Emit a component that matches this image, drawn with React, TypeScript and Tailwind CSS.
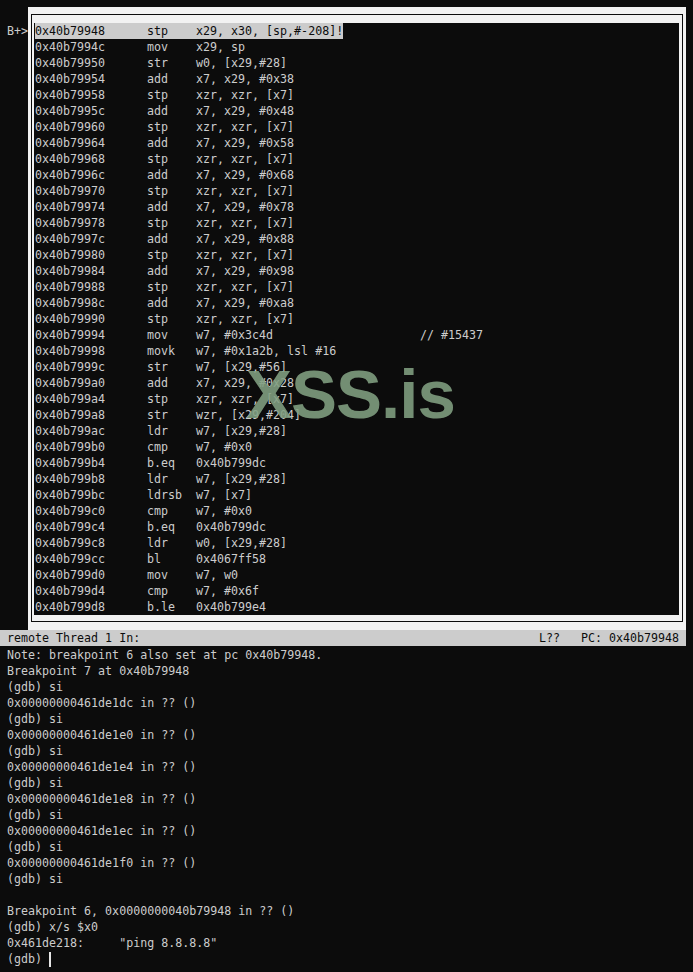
const rows: [string, string, string, string?][] = [
  ['0x40b79948', 'stp', 'x29, x30, [sp,#-208]!'],
  ['0x40b7994c', 'mov', 'x29, sp'],
  ['0x40b79950', 'str', 'w0, [x29,#28]'],
  ['0x40b79954', 'add', 'x7, x29, #0x38'],
  ['0x40b79958', 'stp', 'xzr, xzr, [x7]'],
  ['0x40b7995c', 'add', 'x7, x29, #0x48'],
  ['0x40b79960', 'stp', 'xzr, xzr, [x7]'],
  ['0x40b79964', 'add', 'x7, x29, #0x58'],
  ['0x40b79968', 'stp', 'xzr, xzr, [x7]'],
  ['0x40b7996c', 'add', 'x7, x29, #0x68'],
  ['0x40b79970', 'stp', 'xzr, xzr, [x7]'],
  ['0x40b79974', 'add', 'x7, x29, #0x78'],
  ['0x40b79978', 'stp', 'xzr, xzr, [x7]'],
  ['0x40b7997c', 'add', 'x7, x29, #0x88'],
  ['0x40b79980', 'stp', 'xzr, xzr, [x7]'],
  ['0x40b79984', 'add', 'x7, x29, #0x98'],
  ['0x40b79988', 'stp', 'xzr, xzr, [x7]'],
  ['0x40b7998c', 'add', 'x7, x29, #0xa8'],
  ['0x40b79990', 'stp', 'xzr, xzr, [x7]'],
  ['0x40b79994', 'mov', 'w7, #0x3c4d', '// #15437'],
  ['0x40b79998', 'movk', 'w7, #0x1a2b, lsl #16'],
  ['0x40b7999c', 'str', 'w7, [x29,#56]'],
  ['0x40b799a0', 'add', 'x7, x29, #0x28'],
  ['0x40b799a4', 'stp', 'xzr, xzr, [x7]'],
  ['0x40b799a8', 'str', 'wzr, [x29,#204]'],
  ['0x40b799ac', 'ldr', 'w7, [x29,#28]'],
  ['0x40b799b0', 'cmp', 'w7, #0x0'],
  ['0x40b799b4', 'b.eq', '0x40b799dc'],
  ['0x40b799b8', 'ldr', 'w7, [x29,#28]'],
  ['0x40b799bc', 'ldrsb', 'w7, [x7]'],
  ['0x40b799c0', 'cmp', 'w7, #0x0'],
  ['0x40b799c4', 'b.eq', '0x40b799dc'],
  ['0x40b799c8', 'ldr', 'w0, [x29,#28]'],
  ['0x40b799cc', 'bl', '0x4067ff58'],
  ['0x40b799d0', 'mov', 'w7, w0'],
  ['0x40b799d4', 'cmp', 'w7, #0x6f'],
  ['0x40b799d8', 'b.le', '0x40b799e4'],
]

const output = [
  'Note: breakpoint 6 also set at pc 0x40b79948.',
  'Breakpoint 7 at 0x40b79948',
  '(gdb) si',
  '0x00000000461de1dc in ?? ()',
  '(gdb) si',
  '0x00000000461de1e0 in ?? ()',
  '(gdb) si',
  '0x00000000461de1e4 in ?? ()',
  '(gdb) si',
  '0x00000000461de1e8 in ?? ()',
  '(gdb) si',
  '0x00000000461de1ec in ?? ()',
  '(gdb) si',
  '0x00000000461de1f0 in ?? ()',
  '(gdb) si',
  '',
  'Breakpoint 6, 0x0000000040b79948 in ?? ()',
  '(gdb) x/s $x0',
  '0x461de218:     "ping 8.8.8.8"',
]

export default function App() {
  return (
    <div
      className="relative w-[693px] h-[972px] overflow-hidden bg-[#0c0c0c] text-[#cccccc] text-[11.65px] leading-[16px] whitespace-pre"
      style={{ fontFamily: '"DejaVu Sans Mono", "Liberation Mono", monospace' }}
    >
      {/* source window */}
      <div className="flex pt-[7px]">
        <div className="w-[28px] pt-[16px] pl-[7px]">B+&gt;</div>
        <div className="w-[658px] bg-[#f2f2f2] pt-[7px] pb-[8px] px-[3px]">
          <div className="border border-[#0c0c0c] pt-[8px] pb-[6px] pl-[2px] pr-[3px]">
            <div className="bg-[#0c0c0c] pl-[1px]">
              {rows.map(([addr, op, args, comment], i) => (
                <div key={addr} className="flex h-[16px]">
                  <div className={i === 0 ? 'flex bg-[#cccccc] text-[#0c0c0c]' : 'flex'}>
                    <span className="w-[112px]">{addr}</span>
                    <span className="w-[49px]">{op}</span>
                    <span className={comment ? 'w-[224px]' : ''}>{args}</span>
                  </div>
                  {comment && <span>{comment}</span>}
                </div>
              ))}
            </div>
          </div>
        </div>
      </div>

      {/* status line */}
      <div className="flex h-[16px] w-[686px] bg-[#cccccc] text-[#0c0c0c] pl-[7px]">
        <span className="w-[532px]">remote Thread 1 In:</span>
        <span className="w-[42px]">L??</span>
        <span>PC: 0x40b79948</span>
      </div>

      {/* command window */}
      <div className="pl-[7px] mt-[1px]">
        {output.map((line, i) => (
          <div key={i} className="h-[16px]">{line}</div>
        ))}
        <div className="flex h-[16px] items-center">
          <span>(gdb) </span>
          <span className="w-[1.5px] h-[15px] bg-[#e6e6e6]" />
        </div>
      </div>

      {/* watermark */}
      <div
        className="absolute left-[246px] top-[360px] text-[69px] leading-none font-bold tracking-[-1px] text-[#82a082] opacity-[0.88]"
        style={{ fontFamily: '"Liberation Sans", Arial, sans-serif' }}
      >
        XSS.is
      </div>
    </div>
  )
}
